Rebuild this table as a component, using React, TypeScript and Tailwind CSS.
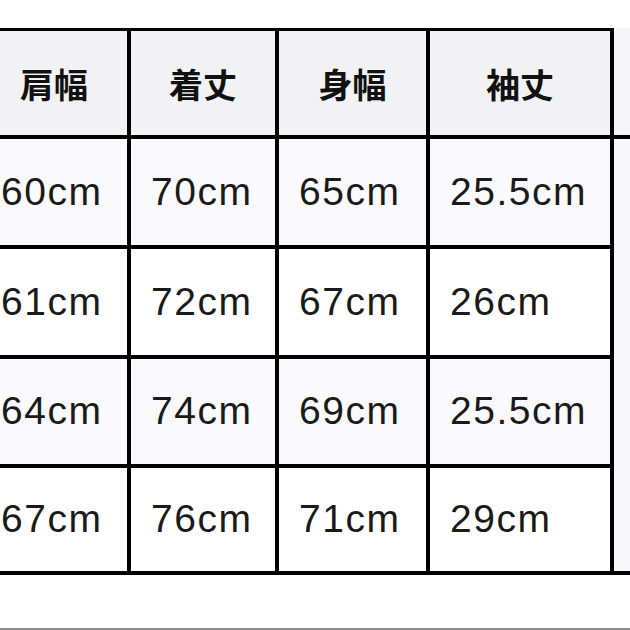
const headers = ["肩幅", "着丈", "身幅", "袖丈"];

const rows = [
  { values: ["60cm", "70cm", "65cm", "25.5cm"], h: "h-[106px]", bg: "bg-[#fafafc]" },
  { values: ["61cm", "72cm", "67cm", "26cm"], h: "h-[106px]", bg: "bg-white" },
  { values: ["64cm", "74cm", "69cm", "25.5cm"], h: "h-[105px]", bg: "bg-[#fafafc]" },
  { values: ["67cm", "76cm", "71cm", "29cm"], h: "h-[103px]", bg: "bg-white" },
];

export default function App() {
  return (
    <div className="w-[630px] h-[630px] bg-white overflow-hidden flex flex-col">
      <div className="h-[28px] shrink-0" />
      <div className="ml-[-19px] grid grid-cols-[146px_144px_147px_180px_40px] gap-[4px] bg-black pt-[3px] pb-[4px] w-fit">
        {headers.map((h) => (
          <div
            key={h}
            className="h-[104px] bg-[#f2f2f4] flex items-center justify-center text-[34px] font-bold text-[#111] font-['Noto_Sans_CJK_JP','Noto_Sans_CJK_SC',sans-serif]"
          >
            {h}
          </div>
        ))}
        <div className="h-[107px] -mt-[3px] bg-[#f6f6f8]" />

        {rows.map((r, i) =>
          r.values.map((v, j) => (
            <div
              key={`${i}-${j}`}
              className={`${r.h} ${r.bg} flex items-center pl-[20px] text-[39px] tracking-[1.5px] text-[#1a1a1a] font-['Liberation_Sans',Arial,sans-serif]`}
              style={{ gridRow: i + 2, gridColumn: j + 1 }}
            >
              {v}
            </div>
          ))
        )}
        <div className="bg-[#f8f8fa] row-start-2 row-span-4 col-start-5" />
      </div>
      <div className="flex-1" />
      <div className="h-[2px] bg-[#8c8c8c] shrink-0" />
    </div>
  );
}
